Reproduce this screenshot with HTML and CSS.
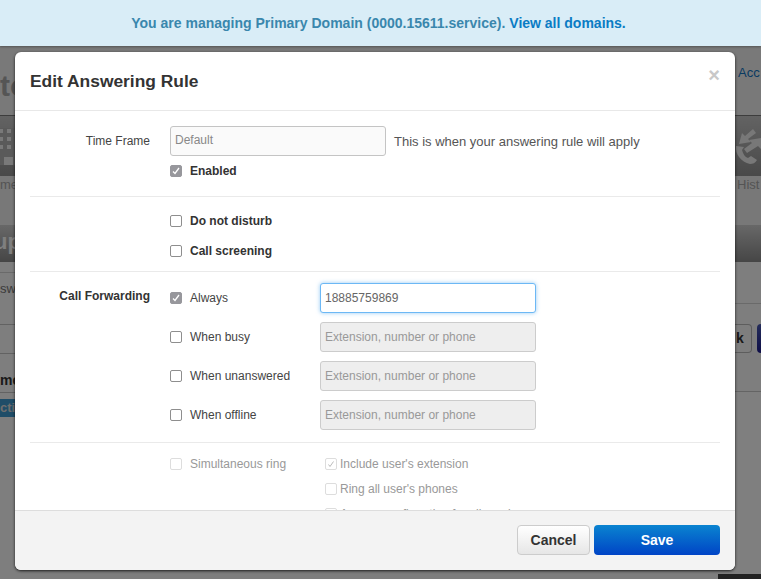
FILE: index.html
```html
<!DOCTYPE html>
<html lang="en">
<head>
  <meta charset="UTF-8">
  <meta name="viewport" content="width=device-width, initial-scale=1.0">
  <title>Edit Answering Rule</title>
  <link rel="stylesheet" href="styles.css">
</head>
<body>
  <div class="banner">You are managing Primary Domain (0000.15611.service). <a href="#">View all domains.</a></div>

  <!-- page behind the dialog -->
  <div class="page">
    <div class="page-top">
      <span class="page-title">to</span>
      <a class="page-link" href="#">Acc</a>
    </div>
    <div class="page-nav">
      <svg class="icon-building" width="15" height="37" viewBox="0 0 15 37">
        <rect width="15" height="37" fill="#b4b4b4"/>
        <g fill="#f2f2f2">
          <rect x="0" y="1" width="3" height="4"/><rect x="7" y="1" width="4" height="4"/>
          <rect x="0" y="9" width="3" height="4"/><rect x="7" y="9" width="4" height="4"/>
          <rect x="0" y="17" width="3" height="4"/><rect x="7" y="17" width="4" height="4"/>
          <rect x="4" y="29" width="9" height="8"/>
        </g>
      </svg>
      <svg class="icon-calls" width="26" height="40" viewBox="0 0 26 40">
        <g fill="#f0f0f0">
          <path d="M18 3l3 4-8 6 3 3-12 2 3-11 3 3z"/>
          <path d="M12 27l-3-4 8-6-3-3 12-2v11l-3-3z"/>
          <path d="M1 20c-1 8 5 16 14 18 3 0 5-1 7-4l-6-4-3 2c-3-1-5-4-6-8l2-3z"/>
        </g>
      </svg>
    </div>
    <div class="page-sub">
      <span>me</span>
      <span>Hist</span>
    </div>
    <div class="page-bar"><span>up</span></div>
    <div class="page-rest">
      <div class="rest-left">
        <div class="left-a"></div>
        <div class="left-b">sw</div>
        <div class="left-c"></div>
        <div class="left-d">me</div>
        <div class="left-e">cti</div>
      </div>
      <div class="rest-right">
        <div class="right-a"></div>
        <div class="right-b"></div>
        <div class="right-btns">
          <span class="btn-back">k</span>
          <span class="btn-blue"></span>
        </div>
        <div class="right-c"></div>
        <div class="right-d"></div>
        <div class="right-foot"></div>
      </div>
    </div>
  </div>
  <div class="overlay"></div>

  <div class="modal">
    <div class="modal-header">
      <h3>Edit Answering Rule</h3>
      <span class="close">×</span>
    </div>

    <div class="modal-body">
      <div class="section sec-time">
        <div class="label">Time Frame</div>
        <div>
          <div class="time-row">
            <input class="txt txt-time" type="text" value="Default">
            <span class="hint">This is when your answering rule will apply</span>
          </div>
          <div class="chk-row enabled-row">
            <span class="chk on"><svg width="8" height="8" viewBox="0 0 8 8"><path d="M1 4.5l2 2L7 1" fill="none" stroke="#fff" stroke-width="1.3"/></svg></span>
            <b>Enabled</b>
          </div>
        </div>
      </div>

      <div class="section sec-flags">
        <div></div>
        <div class="flags">
          <div class="chk-row"><span class="chk"></span><b>Do not disturb</b></div>
          <div class="chk-row"><span class="chk"></span><b>Call screening</b></div>
        </div>
      </div>

      <div class="section sec-forward">
        <div class="label label-strong">Call Forwarding</div>
        <div class="forward">
          <div class="chk-row">
            <span class="chk on"><svg width="8" height="8" viewBox="0 0 8 8"><path d="M1 4.5l2 2L7 1" fill="none" stroke="#fff" stroke-width="1.3"/></svg></span>
            Always
          </div>
          <input class="txt txt-focus" type="text" value="18885759869">
          <div class="chk-row"><span class="chk"></span>When busy</div>
          <input class="txt txt-off" type="text" placeholder="Extension, number or phone" disabled>
          <div class="chk-row"><span class="chk"></span>When unanswered</div>
          <input class="txt txt-off" type="text" placeholder="Extension, number or phone" disabled>
          <div class="chk-row"><span class="chk"></span>When offline</div>
          <input class="txt txt-off" type="text" placeholder="Extension, number or phone" disabled>
        </div>
      </div>

      <div class="section sec-ring no-line">
        <div></div>
        <div class="ring">
          <div class="chk-row muted"><span class="chk"></span>Simultaneous ring</div>
          <div class="ring-opts">
            <div class="chk-row muted tight">
              <span class="chk"><svg width="8" height="8" viewBox="0 0 8 8"><path d="M1.5 4.5l1.5 2L6.5 1.5" fill="none" stroke="#bbb" stroke-width="1"/></svg></span>
              Include user's extension
            </div>
            <div class="chk-row muted tight"><span class="chk"></span>Ring all user's phones</div>
            <div class="chk-row muted tight"><span class="chk"></span>Answer confirmation for all numbers</div>
          </div>
        </div>
      </div>
    </div>

    <div class="modal-footer">
      <button class="btn btn-cancel">Cancel</button>
      <button class="btn btn-save">Save</button>
    </div>
  </div>
</body>
</html>
```

FILE: styles.css
```css
* {
  box-sizing: border-box;
}

html, body {
  height: 100%;
}

body {
  margin: 0;
  position: relative;
  overflow: hidden;
  background-color: #fff;
  font-family: "Liberation Sans", Arial, sans-serif;
  font-size: 12px;
  color: #333;
}

a {
  text-decoration: none;
}

.banner {
  height: 46px;
  padding-right: 4px;
  display: flex;
  align-items: center;
  justify-content: center;
  gap: 4px;
  background-color: #d9edf7;
  color: #3a87ad;
  font-size: 14px;
  font-weight: bold;
  position: relative;
  z-index: 2;
  box-shadow: 0 1px 2px rgba(0, 0, 0, 0.3);
}

.banner a {
  color: #0a7cc4;
}

/* page behind the dialog, the overlay halves all these colours */
.page {
  height: 533px;
  overflow: hidden;
}

.overlay {
  position: absolute;
  left: 0;
  right: 0;
  top: 46px;
  bottom: 0;
  background-color: rgba(0, 0, 0, 0.5);
}

.page-top {
  height: 70px;
  display: flex;
  justify-content: space-between;
  background-color: #f2f2f2;
  border-bottom: 1px solid #7a7a7a;
}

.page-title {
  margin-top: 22px;
  font-size: 30px;
  line-height: 36px;
  font-weight: bold;
  color: #aaa;
}

.page-link {
  margin-top: 19px;
  width: 23px;
  overflow: hidden;
  font-size: 13px;
  line-height: 16px;
  color: #1476c4;
}

.page-nav {
  height: 60px;
  padding-top: 12px;
  display: flex;
  justify-content: space-between;
  align-items: flex-start;
  background: linear-gradient(#c6c6c6, #939393);
}

.icon-calls {
  margin-top: -2px;
}

.page-sub {
  height: 49px;
  display: flex;
  justify-content: space-between;
  padding-top: 2px;
  background-color: #f0f0f0;
  color: #a8a8a8;
  font-size: 13px;
  line-height: 14px;
}

.page-sub span:last-child {
  width: 24px;
  overflow: hidden;
}

.page-bar {
  height: 37px;
  background: linear-gradient(#d0d0d0, #8c8c8c);
  font-size: 22px;
  font-weight: bold;
  line-height: 33px;
  color: #fff;
}

.page-bar span {
  margin-left: -6px;
}

.page-rest {
  display: flex;
  justify-content: space-between;
  height: 317px;
  background-color: #fcfcfc;
}

.rest-left {
  width: 15px;
}

.left-a {
  height: 11px;
  border-bottom: 1px solid #d4d4d4;
}

.left-b {
  height: 52px;
  padding-top: 8px;
  border-bottom: 1px solid #c4c4c4;
  font-size: 13px;
  line-height: 16px;
  color: #777;
  white-space: nowrap;
}

.left-c {
  height: 29px;
  border-bottom: 1px solid #c4c4c4;
}

.left-d {
  height: 39px;
  padding-top: 18px;
  border-bottom: 1px solid #c4c4c4;
  font-size: 14px;
  font-weight: bold;
  line-height: 16px;
  color: #333;
}

.left-e {
  margin-top: 6px;
  height: 18px;
  background-color: #3e9ad0;
  color: #ddd;
  font-size: 13px;
  font-weight: bold;
  line-height: 18px;
}

.rest-right {
  width: 43px;
  overflow: hidden;
}

.right-a {
  height: 42px;
  border-bottom: 1px solid #d4d4d4;
}

.right-b {
  height: 20px;
}

.right-btns {
  height: 29px;
  margin-left: 17px;
  display: flex;
  gap: 5px;
}

.btn-back {
  flex: 0 0 17px;
  border: 1px solid #bbb;
  border-left: 0;
  border-radius: 0 4px 4px 0;
  font-size: 14px;
  font-weight: bold;
  line-height: 27px;
  color: #333;
  padding-left: 1px;
}

.btn-blue {
  flex: 0 0 10px;
  border-radius: 4px 0 0 4px;
  background: linear-gradient(#4a5ab4, #1c1c90);
}

.right-c {
  height: 39px;
  border-bottom: 1px solid #c8c8c8;
}

.right-d {
  height: 182px;
  background-color: #fff;
}

.right-foot {
  height: 5px;
  background-color: #444;
}

/* dialog */
.modal {
  position: absolute;
  left: 15px;
  top: 52px;
  width: 720px;
  height: 518px;
  display: flex;
  flex-direction: column;
  overflow: hidden;
  background-color: #fff;
  border-radius: 6px;
  box-shadow: 0 1px 3px rgba(0, 0, 0, 0.8);
}

.modal-header {
  flex: 0 0 59px;
  display: flex;
  justify-content: space-between;
  padding: 0 15px;
  border-bottom: 1px solid #e8e8e8;
}

.modal-header h3 {
  margin: 0;
  font-size: 17.4px;
  line-height: 58px;
  color: #333;
}

.close {
  font-size: 20px;
  font-weight: bold;
  line-height: 47px;
  color: #c8c8c8;
}

.modal-body {
  flex: 1;
  min-height: 0;
  overflow: hidden;
  padding: 0 15px;
}

.section {
  display: grid;
  grid-template-columns: 120px 1fr;
  column-gap: 20px;
  border-bottom: 1px solid #eaeaea;
}

.no-line {
  border-bottom: 0;
}

.label {
  text-align: right;
  line-height: 30px;
  color: #444;
}

.label-strong {
  font-weight: bold;
  color: #333;
  line-height: 26px;
}

.sec-time {
  padding: 15px 0 17px;
}

.time-row {
  display: flex;
  align-items: center;
  gap: 8px;
}

.hint {
  font-size: 13px;
  color: #555;
}

.enabled-row {
  margin-top: 7px;
}

.sec-flags {
  padding: 16px 0 12px;
}

.flags {
  display: flex;
  flex-direction: column;
  gap: 14px;
}

.sec-forward {
  padding: 11px 0 12px;
}

.forward {
  display: grid;
  grid-template-columns: 150px 216px;
  row-gap: 9px;
  align-items: center;
}

.sec-ring {
  padding-top: 13px;
}

.ring {
  display: grid;
  grid-template-columns: 155px 1fr;
}

.ring-opts {
  display: flex;
  flex-direction: column;
  gap: 9px;
}

.chk-row {
  display: flex;
  align-items: center;
  gap: 8px;
  height: 16px;
  color: #444;
  white-space: nowrap;
}

.chk-row b {
  color: #333;
}

.muted {
  color: #999;
}

.tight {
  gap: 3px;
}

.chk {
  flex: 0 0 12px;
  width: 12px;
  height: 12px;
  display: flex;
  align-items: center;
  justify-content: center;
  background-color: #fff;
  border: 1px solid #8e8e8e;
  border-radius: 2px;
}

.chk.on {
  background-color: #97979c;
  border-color: #97979c;
}

.muted .chk {
  border-color: #ddd;
}

.txt {
  width: 216px;
  height: 30px;
  padding: 0 4px;
  font-family: inherit;
  font-size: 12px;
  border: 1px solid #ccc;
  border-radius: 3px;
  outline: none;
  color: #666;
  background-color: #fff;
}

.txt-time {
  background-color: #fafafa;
  color: #888;
  padding-bottom: 3px;
  border-color: #c4c4c4;
}

.txt-focus {
  border-color: #6cb8f5;
  box-shadow: 0 0 4px rgba(82, 168, 236, 0.6);
}

.txt-off {
  background-color: #eee;
}

.txt-off::placeholder {
  color: #999;
  opacity: 1;
}

.modal-footer {
  flex: 0 0 60px;
  display: flex;
  justify-content: flex-end;
  gap: 4px;
  padding: 14px 15px 0;
  background-color: #f3f3f3;
  border-top: 1px solid #ddd;
}

.btn {
  height: 30px;
  font-family: inherit;
  font-size: 14px;
  font-weight: bold;
  border-radius: 4px;
  cursor: pointer;
}

.btn-cancel {
  width: 73px;
  color: #333;
  border: 1px solid #ccc;
  background: linear-gradient(#fff, #e6e6e6);
}

.btn-save {
  width: 126px;
  color: #fff;
  border: 0;
  background: linear-gradient(#0a84d0, #0044c6);
}
```
